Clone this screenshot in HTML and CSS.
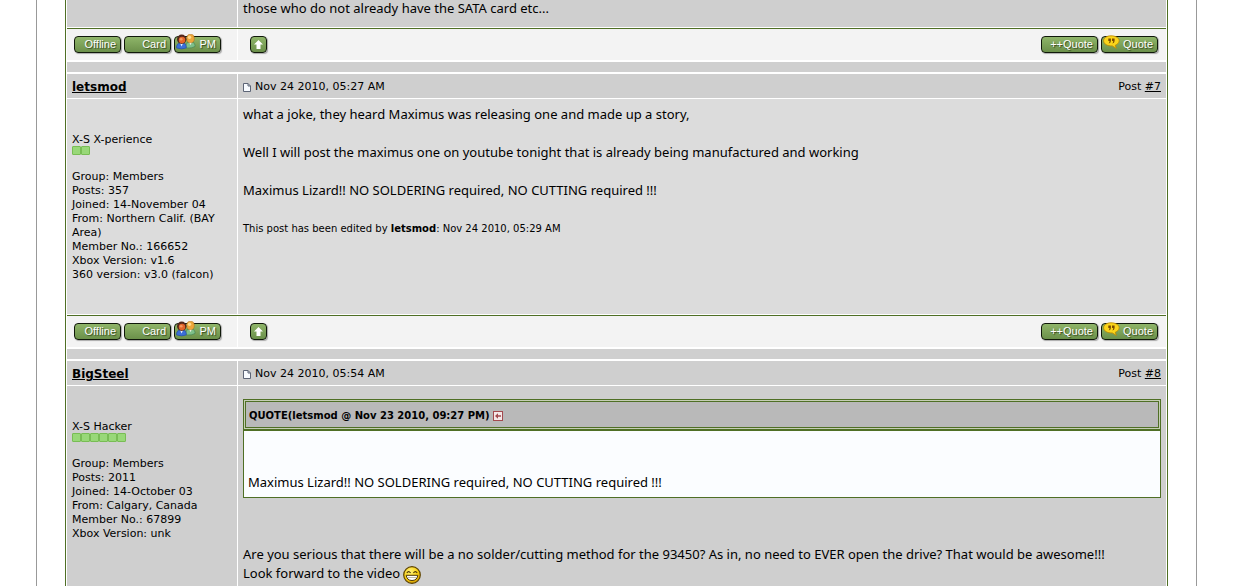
FILE: index.html
```html
<!DOCTYPE html>
<html lang="en">
<head>
<meta charset="utf-8">
<title>Forum topic</title>
<link rel="stylesheet" href="styles.css">
</head>
<body>
<svg class="sprite" width="0" height="0" aria-hidden="true">
  <defs>
    <radialGradient id="gold" cx="40%" cy="30%" r="75%"><stop offset="0" stop-color="#fff27a"/><stop offset="0.6" stop-color="#f8cf10"/><stop offset="1" stop-color="#d09500"/></radialGradient>
    <symbol id="people" viewBox="0 0 20 16">
      <path d="M10 14V11Q10.500 7.500 14.500 7.500Q18.500 7.500 19 11V12.500Q16 14.500 10 14Z" fill="#7fc08a" stroke="#3e7c4c" stroke-width=".6"/>
      <path d="M13 8L14.500 11L16 8Z" fill="#fff"/>
      <ellipse cx="14.500" cy="4.500" rx="3.800" ry="4.300" fill="#eda63a" stroke="#ad6a17" stroke-width=".5"/>
      <ellipse cx="13.500" cy="3.200" rx="1.700" ry="1.800" fill="#ffd98a"/>
      <path d="M.6 14V12Q1.500 8.500 5.500 8.500Q9.800 8.500 10.200 12V14Q6 15.800 .6 14Z" fill="#3b6fd8" stroke="#234a9f" stroke-width=".6"/>
      <path d="M4 9L5.500 12.500L7.200 9Z" fill="#e8f1ff"/>
      <circle cx="5.700" cy="5.300" r="4.700" fill="#54281c"/>
      <ellipse cx="6" cy="6" rx="3.200" ry="3.300" fill="#e3652b"/>
      <ellipse cx="5.200" cy="5.200" rx="1.400" ry="1.200" fill="#f59b62"/>
    </symbol>
    <symbol id="bubble" viewBox="0 0 17 14">
      <path d="M8 .8C12.500 .8 16.200 2.900 16.200 5.700C16.200 8.100 14 9.500 12.300 10.200L13.300 13.400L9.300 10.900C4.500 11.200 .6 9 .6 5.800C.6 2.900 3.800 .8 8 .8Z" fill="#fbd51b" stroke="#b98500" stroke-width=".8"/>
      <path d="M5.300 3.500H7.900V6Q7.800 8.100 5.700 8.400Q6.600 7.200 6.500 6H5.300ZM9 3.500H11.600V6Q11.500 8.100 9.400 8.400Q10.300 7.200 10.200 6H9Z" fill="#7a4b00"/>
    </symbol>
    <symbol id="up" viewBox="0 0 11 11"><path d="M5.500 1L10 5.500H7.500V10H3.500V5.500H1Z" fill="#fff"/></symbol>
    <symbol id="sheet" viewBox="0 0 8 9"><path d="M.5 .5H5L7.500 3V8.500H.5Z" fill="#f8fbff" stroke="#5d6576"/><path d="M5 .5V3H7.500" fill="none" stroke="#5d6576"/></symbol>
    <symbol id="back" viewBox="0 0 10 10"><rect x=".5" y=".5" width="9" height="9" fill="#f5e9e9" stroke="#a34a4f"/><path d="M2 5L5 2.300V4.300H8V5.700H5V7.700Z" fill="#a34a4f"/></symbol>
    <symbol id="grin" viewBox="0 0 18 18">
      <circle cx="9" cy="9" r="8.300" fill="url(#gold)" stroke="#5d4300" stroke-width="1.200"/>
      <path d="M3.800 7Q5.600 4.200 7.600 7M10.400 7Q12.400 4.200 14.200 7" fill="none" stroke="#4b3500" stroke-width="1.100"/>
      <path d="M3.200 9.300H14.800Q14 14.500 9 14.500Q4 14.500 3.200 9.300Z" fill="#fff" stroke="#4b3500" stroke-width="1"/>
      <path d="M4.500 11.500H13.500" stroke="#9a9070" stroke-width=".6"/>
    </symbol>
  </defs>
</svg>
<main class="page">
  <div class="topic">
    <article class="post">
      <div class="cells">
        <div class="user"></div>
        <div class="message tail"><p>those who do not already have the SATA card etc...</p></div>
      </div>
      <footer class="cells actions">
        <div class="left-tools"><button class="btn">Offline</button><button class="btn">Card</button><button class="btn"><svg class="people"><use href="#people"/></svg>PM</button></div>
        <div class="right-tools"><button class="btn top" aria-label="Top"><svg class="up"><use href="#up"/></svg></button><span class="space"></span><button class="btn wide">++Quote</button><button class="btn wide"><svg class="bubble"><use href="#bubble"/></svg>Quote</button></div>
      </footer>
    </article>

    <article class="post">
      <header class="cells heading">
        <div class="name"><a href="#letsmod">letsmod</a></div>
        <div class="meta"><svg class="sheet"><use href="#sheet"/></svg><span>Nov 24 2010, 05:27 AM</span><span class="space"></span><span>Post <a href="#7">#7</a></span></div>
      </header>
      <div class="cells light">
        <div class="user">
          <div>X-S X-perience</div>
          <div class="pips"><i></i><i></i></div>
          <div>Group: Members</div><div>Posts: 357</div><div>Joined: 14-November 04</div><div>From: Northern Calif. (BAY Area)</div><div>Member No.: 166652</div><div>Xbox Version: v1.6</div><div>360 version: v3.0 (falcon)</div>
        </div>
        <div class="message">
          <p>what a joke, they heard Maximus was releasing one and made up a story,</p>
          <p>Well I will post the maximus one on youtube tonight that is already being manufactured and working</p>
          <p>Maximus Lizard!! NO SOLDERING required, NO CUTTING required !!!</p>
          <p class="edited">This post has been edited by <b>letsmod</b>: Nov 24 2010, 05:29 AM</p>
        </div>
      </div>
      <footer class="cells actions">
        <div class="left-tools"><button class="btn">Offline</button><button class="btn">Card</button><button class="btn"><svg class="people"><use href="#people"/></svg>PM</button></div>
        <div class="right-tools"><button class="btn top" aria-label="Top"><svg class="up"><use href="#up"/></svg></button><span class="space"></span><button class="btn wide">++Quote</button><button class="btn wide"><svg class="bubble"><use href="#bubble"/></svg>Quote</button></div>
      </footer>
    </article>

    <article class="post last">
      <header class="cells heading">
        <div class="name"><a href="#bigsteel">BigSteel</a></div>
        <div class="meta"><svg class="sheet"><use href="#sheet"/></svg><span>Nov 24 2010, 05:54 AM</span><span class="space"></span><span>Post <a href="#8">#8</a></span></div>
      </header>
      <div class="cells grow">
        <div class="user">
          <div>X-S Hacker</div>
          <div class="pips"><i></i><i></i><i></i><i></i><i></i><i></i></div>
          <div>Group: Members</div><div>Posts: 2011</div><div>Joined: 14-October 03</div><div>From: Calgary, Canada</div><div>Member No.: 67899</div><div>Xbox Version: unk</div>
        </div>
        <div class="message quoted">
          <blockquote>
            <div class="quote-head">QUOTE(letsmod @ Nov 23 2010, 09:27 PM) <a href="#quoted" aria-label="View quoted post"><svg class="back"><use href="#back"/></svg></a></div>
            <div class="quote-body">Maximus Lizard!! NO SOLDERING required, NO CUTTING required !!!</div>
          </blockquote>
          <p>Are you serious that there will be a no solder/cutting method for the 93450? As in, no need to EVER open the drive? That would be awesome!!!<br>Look forward to the video <svg class="grin"><use href="#grin"/></svg></p>
        </div>
      </div>
    </article>
  </div>
</main>
</body>
</html>
```

FILE: styles.css
```css
* { box-sizing: border-box; }
body {
  margin: 0;
  padding: 0 43px 0 36px;
  background: #fff;
  color: #000;
  font: 11px/19px Verdana, "DejaVu Sans", sans-serif;
}
.sprite { position: absolute; }
svg { display: block; flex: none; }
a { color: inherit; }
p, blockquote { margin: 0; }

.page {
  display: flex;
  min-height: 100vh;
  padding: 0 28px;
  border: solid #999;
  border-width: 0 1px;
}
.topic {
  display: flex;
  flex: 1;
  flex-direction: column;
  min-width: 0;
  padding: 0 1px;
  border: solid #4f6f25;
  border-width: 0 1px;
}
.post { display: flex; flex-direction: column; }
.last, .grow { flex: 1; }

.cells {
  display: grid;
  grid-template-columns: 170px minmax(0, 1fr);
  column-gap: 1px;
}
.cells > div { background: #cfcfcf; }
.light > div { background: #dcdcdc; }

.heading {
  padding-bottom: 1px;
  line-height: 22px;
}
.name { padding: 2px 5px 0; font-size: 12px; font-weight: bold; }
.meta {
  display: flex;
  align-items: center;
  gap: 4px;
  padding: 2px 5px 0;
}
.space { flex: 1; }
.sheet { width: 8px; height: 9px; }

.user {
  padding: 34px 5px 32px;
  line-height: 14px;
}
.pips { display: flex; margin: -1px 0 15px; }
.pips i {
  width: 9px;
  height: 9px;
  border: 1px solid #78bd54;
  border-radius: 1px;
  background: #98d878;
}

.message { padding: 6px 5px; font-family: "Noto Sans", Verdana, sans-serif; font-size: 13px; }
.message p + p { margin-top: 19px; }
.message .edited { font: 10px/19px Verdana, "DejaVu Sans", sans-serif; }
.tail { padding: 0 5px 10px; line-height: 17px; }
.cells:has(.tail) .user { padding: 0; }
.quoted { padding: 13px 5px 3px; }

blockquote { margin-bottom: 47px; background: #c5ceb4; }
.quote-head {
  display: flex;
  align-items: center;
  gap: 3px;
  height: 31px;
  padding: 2px 3px 0;
  border: 3px double #4f6f25;
  background: #b9b9b9;
  background-clip: padding-box;
  font: bold 10px/14px Verdana, "DejaVu Sans", sans-serif;
}
.back { width: 10px; height: 10px; }
.quote-body {
  padding: 42px 4px 5px;
  border: 1px solid #4f6f25;
  background: #fbfdff;
}
.grin {
  display: inline-block;
  width: 18px;
  height: 18px;
  margin: -4px 0;
  vertical-align: middle;
}

.actions {
  margin-top: 1px;
  padding-bottom: 2px;
  border-top: 1px solid #4f6f25;
}
.actions::after {
  content: "";
  grid-column: 1 / -1;
  height: 10px;
  margin-top: 2px;
  background: #cfcfcf;
}
.actions > div {
  display: flex;
  gap: 3px;
  padding: 7px 8px 7px 7px;
  background: #f3f3f3;
}
.actions .right-tools { padding-left: 12px; }
.btn {
  display: flex;
  position: relative;
  align-items: center;
  justify-content: flex-end;
  width: 47px;
  height: 17px;
  padding: 0 4px;
  border: 1px solid #10180a;
  border-radius: 4px;
  background: linear-gradient(#8fb569, #6b904a);
  box-shadow: 1px 1px 1px #aaa;
  color: #fff;
  font: 11px/15px "Liberation Sans", Arial, sans-serif;
  text-shadow: 1px 1px 1px #34491f;
}
.wide { width: 57px; }
.top { width: 17px; padding: 0 2px; }
.up { width: 11px; height: 11px; }
.people {
  position: absolute;
  top: -3px;
  left: 1px;
  width: 20px;
  height: 16px;
}
.bubble {
  position: absolute;
  top: -2px;
  left: 1px;
  width: 17px;
  height: 14px;
}
```
